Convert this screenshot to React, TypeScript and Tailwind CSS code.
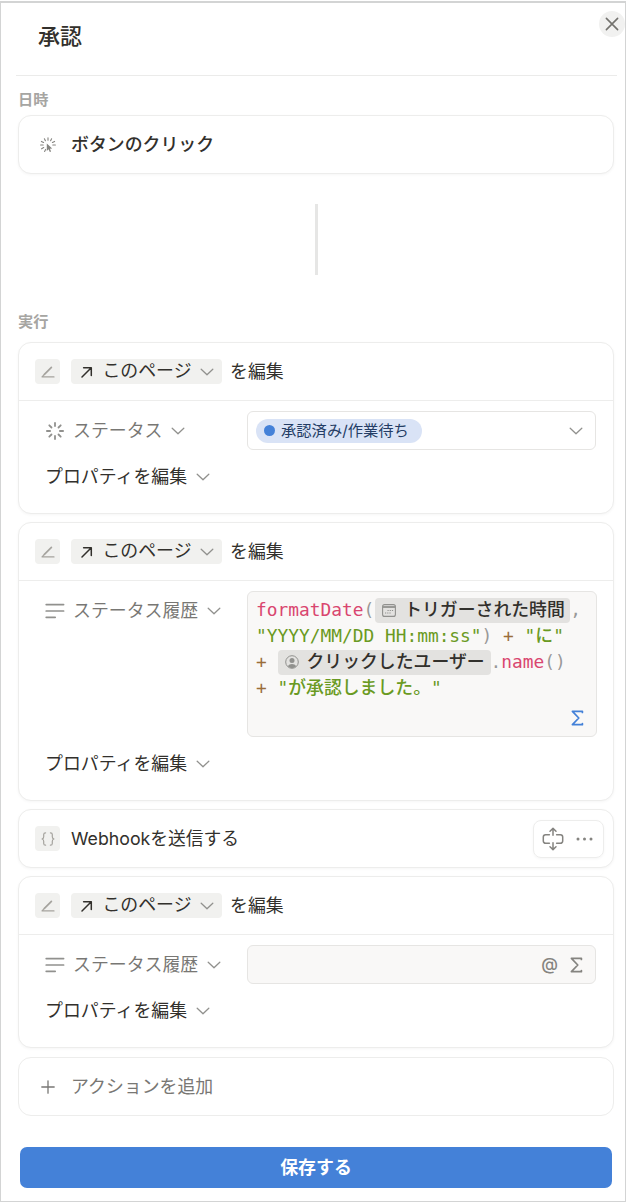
import type { ReactNode } from "react";

interface IconProps {
  className?: string;
}

function ChevronIcon({ className = "" }: IconProps) {
  return (
    <svg width="14" height="8" viewBox="0 0 14 8" fill="none" stroke="currentColor" strokeWidth="1.3" strokeLinecap="round" strokeLinejoin="round" className={`shrink-0 ${className}`}>
      <path d="M1.2 1.2L7 6.800l5.800-5.600" />
    </svg>
  );
}

function CloseIcon() {
  return (
    <svg width="14" height="14" viewBox="0 0 14 14" fill="none" stroke="currentColor" strokeWidth="1.6" strokeLinecap="round">
      <path d="M1.400 1.400l11.200 11.200M12.600 1.400L1.400 12.600" />
    </svg>
  );
}

function ClickIcon() {
  return (
    <svg width="16" height="16" viewBox="0 0 16 16" fill="none" stroke="currentColor" strokeWidth="1.1" strokeLinecap="round">
      <path d="M8 .8v2.4M4.4 1.8l1 2M11.6 1.8l-1 2M1.4 4.4l2.2 1.1M14.6 4.4l-2.2 1.1M.6 8h2.6M12.8 8h2.6M1.6 11.8l2.1-1.2M4.6 14.4l1-2" />
      <path d="M6.8 6.6v7.3l1.8-1.6 1.2 2.8 1.3-.6-1.2-2.7 2.3-.2z" fill="currentColor" stroke="none" />
    </svg>
  );
}

function EditIcon() {
  return (
    <svg width="14" height="12" viewBox="0 0 14 12" fill="none" stroke="currentColor" strokeLinecap="round" strokeLinejoin="round">
      <path d="M10.400 1.400L3.400 8.400" strokeWidth="1.7" />
      <path d="M3.400 8.400L1 10.900h12" strokeWidth="1.2" />
    </svg>
  );
}

function ArrowIcon() {
  return (
    <svg width="12" height="12" viewBox="0 0 12 12" fill="none" stroke="currentColor" strokeWidth="1.5" strokeLinecap="round" strokeLinejoin="round">
      <path d="M1 11L10 2M2.600 1.700H10.300v7.700" />
    </svg>
  );
}

function StatusIcon() {
  return (
    <svg width="18" height="18" viewBox="0 0 18 18" fill="none" stroke="currentColor" strokeWidth="1.8" strokeLinecap="round">
      <path d="M9 .9v3.2M9 13.9v3.2M.9 9h3.2M13.9 9h3.2M3.3 3.3l2.2 2.2M12.5 12.5l2.2 2.2M3.3 14.7l2.2-2.2M12.5 5.500l2.200-2.200" />
    </svg>
  );
}

function TextIcon() {
  return (
    <svg width="20" height="16" viewBox="0 0 20 16" fill="none" stroke="currentColor" strokeWidth="1.7" strokeLinecap="round">
      <path d="M1.200 1.600h17.400M1.200 8h17.400M1.200 14.300h9" />
    </svg>
  );
}

function BracesIcon() {
  return (
    <svg width="14" height="14" viewBox="0 0 14 14" fill="none" stroke="currentColor" strokeWidth="1.2" strokeLinecap="round" strokeLinejoin="round">
      <path d="M4.600.8C3 .8 2.700 1.500 2.700 2.600v2.200c0 1.200-.5 2-1.700 2.200 1.200.2 1.700 1 1.700 2.200v2.200c0 1.100.3 1.800 1.900 1.800" />
      <path d="M9.400.8c1.600 0 1.900.7 1.900 1.800v2.200c0 1.200.5 2 1.700 2.200-1.200.2-1.700 1-1.700 2.200v2.200c0 1.100-.3 1.800-1.900 1.800" />
    </svg>
  );
}

function ExpandIcon() {
  return (
    <svg width="22" height="24" viewBox="0 0 22 24" fill="none" stroke="currentColor" strokeWidth="1.5" strokeLinecap="round" strokeLinejoin="round">
      <path d="M7.400 7.700H3.600a2.300 2.300 0 0 0-2.300 2.300v4a2.300 2.300 0 0 0 2.300 2.300h3.800M14.600 7.700h3.800a2.300 2.300 0 0 1 2.300 2.300v4a2.300 2.300 0 0 1-2.300 2.300h-3.800" />
      <path d="M11 8.200V1.500M8 4.200L11 1.400l3 2.800M11 15.800v6.700M8 19.800l3 2.800 3-2.800" />
    </svg>
  );
}

function SigmaIcon() {
  return (
    <svg width="13" height="16" viewBox="0 0 13 16" fill="none" stroke="currentColor" strokeWidth="1.7" strokeLinecap="round" strokeLinejoin="round">
      <path d="M11.400 2.400V1.300H1.400L7.800 8l-6.400 6.700h10v-1.100" />
    </svg>
  );
}

function CalendarIcon() {
  return (
    <svg width="14" height="13" viewBox="0 0 14 13" fill="none" stroke="currentColor" className="shrink-0">
      <rect x=".6" y=".6" width="12.800" height="11.800" rx="2" strokeWidth="1.100" />
      <path d="M1 3h12" strokeWidth="1.800" />
      <path d="M5.500 6.500h6M3 9h6.500" strokeWidth="1.200" strokeDasharray="1.200 1" />
    </svg>
  );
}

function UserIcon() {
  return (
    <svg width="14" height="14" viewBox="0 0 14 14" fill="currentColor" className="shrink-0">
      <circle cx="7" cy="7" r="6.300" fill="none" stroke="currentColor" />
      <circle cx="7" cy="5.400" r="2.500" />
      <path d="M2.900 11.200c.8-1.600 2.300-2.300 4.100-2.300s3.300.7 4.100 2.300C10 12.400 8.600 13 7 13s-3-.6-4.100-1.800z" />
    </svg>
  );
}

function Card({ className = "", children }: { className?: string; children: ReactNode }) {
  return (
    <div className={`rounded-[13px] border border-[#ededec] bg-white shadow-[0_1px_3px_rgba(0,0,0,0.04)] ${className}`}>
      {children}
    </div>
  );
}

function IconBox({ children }: { children: ReactNode }) {
  return (
    <span className="flex h-[25px] w-[25px] shrink-0 items-center justify-center rounded bg-[#f1f1ef] text-[#a5a39e]">
      {children}
    </span>
  );
}

function EditHeader() {
  return (
    <div className="flex h-[58px] items-center border-b border-[#ededec] pl-4">
      <IconBox>
        <EditIcon />
      </IconBox>
      <button className="ml-[11px] flex h-[25px] w-[151px] items-center rounded bg-[#f1f1ef] pl-[10px]">
        <ArrowIcon />
        <span className="relative -top-px ml-[9px] w-[90px]">このページ</span>
        <ChevronIcon className="ml-[8px] text-[#91918e]" />
      </button>
      <span className="ml-2">を編集</span>
    </div>
  );
}

function PropertyLabel({ icon, label }: { icon: ReactNode; label: string }) {
  return (
    <div className="flex h-[39px] w-[228px] shrink-0 items-center pl-[26px] text-[#787774]">
      <span className="flex w-5 justify-center text-[#91918e]">{icon}</span>
      <span className="ml-2">{label}</span>
      <ChevronIcon className="ml-[9px] text-[#91918e]" />
    </div>
  );
}

function EditProperties() {
  return (
    <button className="flex items-center pl-[26px]">
      プロパティを編集
      <ChevronIcon className="ml-[9px] text-[#91918e]" />
    </button>
  );
}

function Token({ icon, className, children }: { icon: ReactNode; className: string; children: ReactNode }) {
  return (
    <span className={`flex h-[25px] items-center rounded bg-[#e3e2e0] pl-[7px] text-[#32302c] ${className}`}>
      <span className="mr-[8px] text-[#91918e]">{icon}</span>
      <span className="font-['Inter','Noto_Sans_CJK_JP',sans-serif] font-medium">{children}</span>
    </span>
  );
}

function Formula() {
  return (
    <div className="h-[146px] w-[350px] rounded-md border border-[#e6e5e3] bg-[#f9f8f7] pt-[5px] pl-2 font-['DejaVu_Sans_Mono','Noto_Sans_CJK_JP',monospace] text-[17.850px] leading-[26px] whitespace-pre text-[#6a9a22]">
      <div className="flex h-[26px] items-center">
        <span className="text-[#d9466f]">formatDate</span>
        <span className="text-[#999]">(</span>
        <Token icon={<CalendarIcon />} className="ml-px w-[195px]">トリガーされた時間</Token>
        <span className="text-[#999]">,</span>
      </div>
      <div className="h-[26px]">
        "YYYY/MM/DD HH:mm:ss"<span className="text-[#999]">)</span>
        <span className="text-[#9a6e3a]"> + </span>"<span className="font-medium">に</span>"
      </div>
      <div className="flex h-[26px] items-center">
        <span className="text-[#9a6e3a]">+ </span>
        <Token icon={<UserIcon />} className="w-[213px]">クリックしたユーザー</Token>
        <span className="text-[#999]">.</span>
        <span className="text-[#d9466f]">name</span>
        <span className="text-[#999]">()</span>
      </div>
      <div className="h-[26px]">
        <span className="text-[#9a6e3a]">+ </span>"<span className="font-medium">が承認しました。</span>"
      </div>
      <div className="mt-[9px] mr-[12px] flex justify-end text-[#4481d8]">
        <SigmaIcon />
      </div>
    </div>
  );
}

export default function App() {
  return (
    <div className="h-[1202px] w-[626px] overflow-hidden bg-white pt-px font-['Inter','Noto_Sans_CJK_JP',sans-serif] text-[17.900px] leading-[26px] whitespace-nowrap text-[#32302c]">
      <div className="h-[1201px] border border-t-2 border-[#d3d4d4]">
        <header className="mr-[8px] ml-[15px] flex h-[73px] justify-between border-b border-[#ebebea]">
          <h1 className="mt-[17px] ml-[22px] text-[22px] leading-8 font-medium">承認</h1>
          <button className="mt-[8px] -mr-[8px] flex h-[26px] w-[26px] items-center justify-center rounded-full bg-[#f1f1f0] text-[#73726e]">
            <CloseIcon />
          </button>
        </header>

        <main className="pr-[11px] pl-[17px]">
          <h2 className="mt-[14px] h-[25px] text-[15.200px] leading-5 font-bold text-[#a6a5a2]">日時</h2>
          <Card className="flex h-[59px] items-center pl-[21px]">
            <span className="text-[#858480]">
              <ClickIcon />
            </span>
            <span className="ml-[15px] font-medium">ボタンのクリック</span>
          </Card>

          <div className="mx-auto mt-[30px] h-[71px] w-[3px] bg-[#e6e6e5]" />

          <h2 className="mt-[37px] h-[30px] text-[15.200px] leading-5 font-bold text-[#a6a5a2]">実行</h2>

          <div className="flex flex-col gap-[8px]">
            <Card className="h-[172px]">
              <EditHeader />
              <div className="mt-[10px] mb-[14px] flex">
                <PropertyLabel icon={<StatusIcon />} label="ステータス" />
                <div className="flex h-[39px] w-[349px] items-center justify-between rounded-md border border-[#e6e5e3] pr-3 pl-2">
                  <span className="flex h-[24px] w-[166px] items-center rounded-full bg-[#d9e3f6] pl-2 text-[15.300px] text-[#243d65]">
                    <span className="mr-[6px] h-[11px] w-[11px] rounded-full bg-[#4481d8]" />
                    承認済み/作業待ち
                  </span>
                  <ChevronIcon className="text-[#91918e]" />
                </div>
              </div>
              <EditProperties />
            </Card>

            <Card className="h-[279px]">
              <EditHeader />
              <div className="mt-[10px] mb-[14px] flex">
                <PropertyLabel icon={<TextIcon />} label="ステータス履歴" />
                <Formula />
              </div>
              <EditProperties />
            </Card>

            <Card className="flex h-[59px] items-center pl-4">
              <IconBox>
                <BracesIcon />
              </IconBox>
              <span className="ml-[11px] text-[17.750px]">Webhookを送信する</span>
              <div className="mr-[9px] ml-auto flex h-[38px] w-[71px] items-center justify-between rounded-lg border border-[#ededec] pr-[10px] pl-[8px] text-[#858480] shadow-[0_1px_3px_rgba(0,0,0,0.04)]">
                <ExpandIcon />
                <svg width="17" height="4" viewBox="0 0 17 4" fill="currentColor">
                  <circle cx="2" cy="2" r="1.500" />
                  <circle cx="8.500" cy="2" r="1.500" />
                  <circle cx="15" cy="2" r="1.500" />
                </svg>
              </div>
            </Card>

            <Card className="h-[172px]">
              <EditHeader />
              <div className="mt-[10px] mb-[14px] flex">
                <PropertyLabel icon={<TextIcon />} label="ステータス履歴" />
                <div className="flex h-[39px] w-[349px] items-center justify-end rounded-md border border-[#e6e5e3] bg-[#f9f8f7] pr-[12px] text-[#858480]">
                  <span className="relative -top-px mr-[12px] text-[17px] font-medium">@</span>
                  <SigmaIcon />
                </div>
              </div>
              <EditProperties />
            </Card>

            <Card className="mt-px flex h-[59px] items-center pl-[22px] text-[#787774] shadow-none">
              <svg width="14" height="14" viewBox="0 0 14 14" fill="none" stroke="currentColor" strokeWidth="1.300" strokeLinecap="round">
                <path d="M7 .8v12.400M.8 7h12.400" />
              </svg>
              <span className="ml-[16px]">アクションを追加</span>
            </Card>
          </div>

          <button className="mt-[31px] mr-[2px] ml-[2px] flex h-[41px] w-[592px] items-center justify-center rounded-[7px] bg-[#4481d8] font-bold text-white">
            保存する
          </button>
        </main>
      </div>
    </div>
  );
}
